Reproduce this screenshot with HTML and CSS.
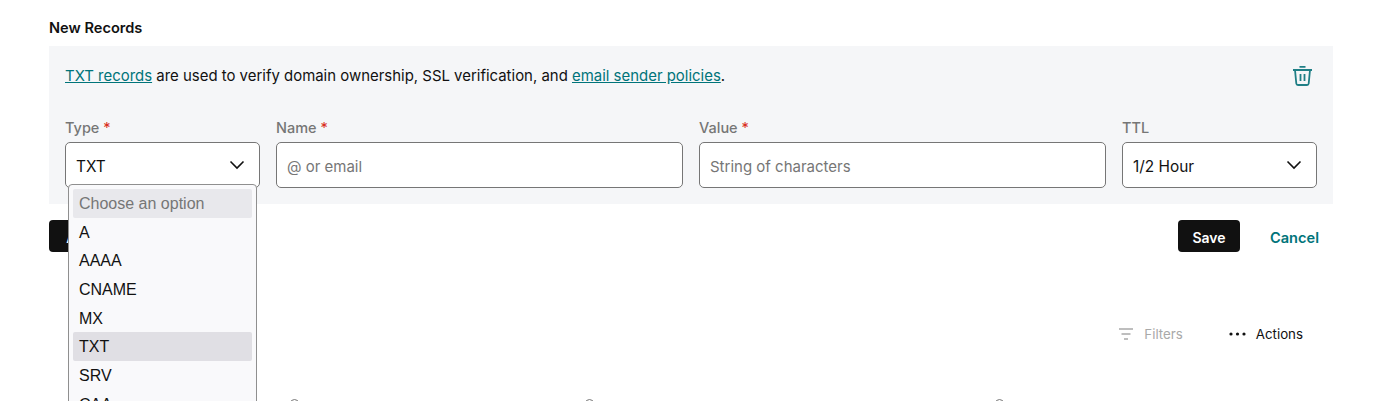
FILE: index.html
```html
<!DOCTYPE html>
<html lang="en">
<head>
<meta charset="utf-8">
<title>New Records</title>
<link rel="stylesheet" href="styles.css">
</head>
<body>
<main class="page">
  <h2 class="title">New Records</h2>
  <section class="panel">
    <div class="panel-head">
      <p class="intro"><a href="#">TXT records</a> are used to verify domain ownership, SSL verification, and <a href="#">email sender policies</a>.</p>
      <button class="trash" aria-label="Delete">
        <svg width="24" height="24" viewBox="0 0 24 24" fill="none" stroke="currentColor" stroke-width="1.8"><path d="M8.500 2.900h6M2 6h19M4 6l1.300 13.500A1.700 1.700 0 0 0 7 21h9a1.700 1.700 0 0 0 1.700-1.500L19 6M9.500 10v7M13.500 10v7"/></svg>
      </button>
    </div>
    <div class="fields">
      <div class="field">
        <label class="label">Type <span class="req">*</span></label>
        <div class="control select"><span>TXT</span><svg class="chev" width="16" height="10" viewBox="0 0 16 10" fill="none" stroke="currentColor" stroke-width="1.6"><path d="M1.500 1.500 8 8l6.500-6.500"/></svg></div>
        <ul class="dropdown">
          <li class="opt placeholder">Choose an option</li>
          <li class="opt">A</li>
          <li class="opt">AAAA</li>
          <li class="opt">CNAME</li>
          <li class="opt">MX</li>
          <li class="opt selected">TXT</li>
          <li class="opt">SRV</li>
          <li class="opt">CAA</li>
        </ul>
      </div>
      <div class="field">
        <label class="label">Name <span class="req">*</span></label>
        <div class="control muted">@ or email</div>
      </div>
      <div class="field">
        <label class="label">Value <span class="req">*</span></label>
        <div class="control muted">String of characters</div>
      </div>
      <div class="field">
        <label class="label">TTL</label>
        <div class="control select"><span>1/2 Hour</span><svg class="chev" width="16" height="10" viewBox="0 0 16 10" fill="none" stroke="currentColor" stroke-width="1.6"><path d="M1.500 1.500 8 8l6.500-6.500"/></svg></div>
      </div>
    </div>
  </section>
  <div class="button-row">
    <button class="btn">Add</button>
    <div class="spacer"></div>
    <button class="btn">Save</button>
    <a class="cancel" href="#">Cancel</a>
  </div>
  <div class="toolbar">
    <span class="tool disabled">
      <svg width="16" height="12" viewBox="0 0 16 12" fill="none" stroke="currentColor" stroke-width="1.3"><path d="M1 1h14M3.500 6h9M6 11h4"/></svg>
      Filters
    </span>
    <span class="tool">
      <svg width="17" height="4" viewBox="0 0 17 4" fill="currentColor"><circle cx="2" cy="2" r="1.600"/><circle cx="8.500" cy="2" r="1.600"/><circle cx="15" cy="2" r="1.600"/></svg>
      Actions
    </span>
  </div>
  <div class="table-head">
    <span class="sort-mark"></span>
    <span class="sort-mark"></span>
    <span class="sort-mark"></span>
  </div>
</main>
</body>
</html>
```
FILE: styles.css
```css
* { box-sizing: border-box; }
html, body { margin: 0; height: 401px; overflow: hidden; background: #fff; }
body { font-family: Inter, "Noto Sans", sans-serif; color: #111; }
.page { padding: 19px 47px 0 49px; }
.title { margin: 0 0 9px; font-size: 14.600px; line-height: 18px; font-weight: 600; }
.panel { background: #f5f6f8; padding: 16px; height: 158px; }
.panel-head { display: flex; justify-content: space-between; align-items: center; height: 28px; margin-bottom: 28px; }
.intro { margin: 0; font-size: 14.950px; line-height: 26px; }
.intro a { color: #00747a; }
.trash { border: 0; background: none; padding: 0; margin-right: 2px; color: #1f7f86; display: flex; }
.fields { display: grid; grid-template-columns: 195px 407px 407px 195px; gap: 16px; }
.field { position: relative; }
.label { display: block; font-size: 14.500px; line-height: 20px; font-weight: 500; color: #767676; margin-bottom: 4px; }
.req { color: #d92d20; font-weight: 400; }
.control { height: 46px; border: 1px solid #767676; border-radius: 5px; background: #fff; padding: 2px 10px 0; display: flex; align-items: center; justify-content: space-between; font-size: 15px; }
.control.select { font-size: 15.400px; }
.control.muted { color: #767676; }
.chev { margin: -3px 4px 0 0; color: #111; }
.dropdown { position: absolute; left: 3px; top: 66px; width: 189px; height: 240px; margin: 0; padding: 4px; list-style: none; background: #f9f9fb; border: 1px solid #8f8f8f; border-radius: 4px; overflow: hidden; font-family: "Liberation Sans", Arial, sans-serif; font-size: 16px; z-index: 2; }
.opt { height: 28.700px; line-height: 29.500px; padding: 0 6px; border-radius: 2px; color: #111; }
.opt.placeholder { background: #e8e8ec; color: #767676; }
.opt.selected { background: #e0dfe4; }
.button-row { display: flex; align-items: center; margin-top: 16px; height: 32px; }
.spacer { flex: 1; }
.btn { height: 32px; width: 62px; padding: 2px 0 0; border: 0; border-radius: 4px; background: #111; color: #fff; font: 600 14px Inter, sans-serif; }
.cancel { margin: 3px 14px 0 30px; font-size: 14.600px; font-weight: 600; color: #00747a; text-decoration: none; }
.toolbar { display: flex; justify-content: flex-end; gap: 46px; margin-top: 72px; padding-right: 30px; font-size: 13.300px; line-height: 20px; }
.tool { display: flex; align-items: center; gap: 10px; color: #111; }
.tool.disabled { color: #a9a9a9; }
.table-head { display: grid; grid-template-columns: 295px 410px 9px; margin: 55px 0 0 241px; }
.sort-mark { width: 9px; height: 9px; border: 1px solid #767676; border-radius: 50%; }
```
